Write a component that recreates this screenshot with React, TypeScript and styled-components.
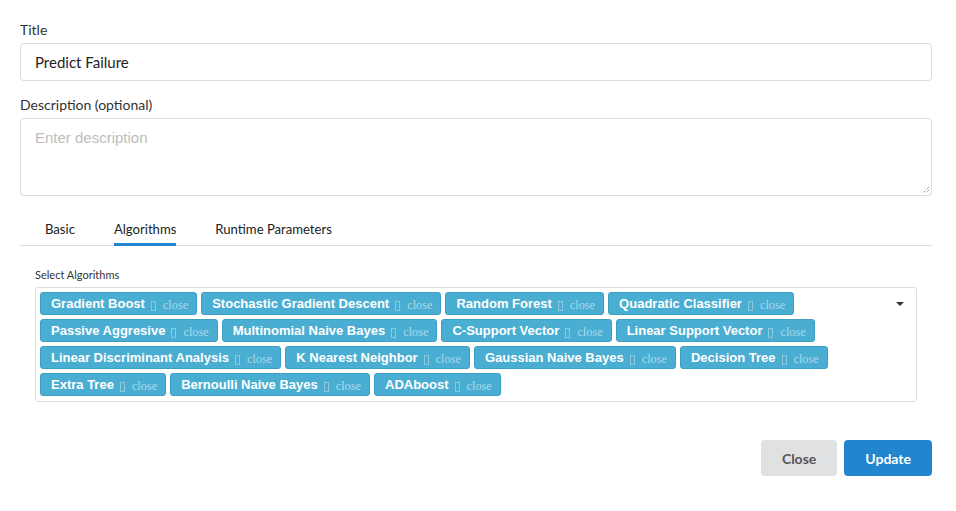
import React from 'react';
import styled, { createGlobalStyle } from 'styled-components';

const GlobalStyle = createGlobalStyle`
  body {
    margin: 0;
    background: #fff;
    font-family: 'Lato', 'Liberation Sans', sans-serif;
    color: #333;
  }
`;

const Page = styled.div`
  width: 956px;
  height: 511px;
  box-sizing: border-box;
  padding: 21px 24px 0 20px;
`;

const Label = styled.div`
  font-size: 14px;
  line-height: 18px;
  color: #333;
  margin-bottom: 4px;
`;

const Input = styled.div`
  height: 38px;
  box-sizing: border-box;
  border: 1px solid #ddd;
  border-radius: 4px;
  padding: 0 14px;
  display: flex;
  align-items: center;
  font-size: 15px;
  color: #222;
  margin-bottom: 15px;
`;

const TextArea = styled.div`
  position: relative;
  height: 78px;
  box-sizing: border-box;
  border: 1px solid #ddd;
  border-radius: 4px;
  padding: 10px 14px;
  font-family: 'Liberation Sans', Arial, sans-serif;
  font-size: 15px;
  color: #bdbdbd;
`;

const Grip = styled.svg`
  position: absolute;
  right: 1px;
  bottom: 1px;
`;

const Tabs = styled.div`
  display: flex;
  margin-top: 20px;
  border-bottom: 1px solid #ddd;
  padding-left: 25px;
  gap: 39px;
`;

const Tab = styled.div<{ $active?: boolean }>`
  font-size: 13.1px;
  line-height: 17px;
  padding: 5px 0 5px;
  color: #222;
  border-bottom: 3px solid ${p => (p.$active ? '#2185d0' : 'transparent')};
  margin-bottom: -1px;
`;

const Section = styled.div`
  padding: 22px 15px 0 15px;
`;

const SmallLabel = styled.div`
  font-size: 11px;
  line-height: 14px;
  color: #333;
  margin-bottom: 5px;
`;

const Select = styled.div`
  position: relative;
  border: 1px solid #ddd;
  border-radius: 3px;
  padding: 4px 30px 4px 4px;
  display: flex;
  flex-wrap: wrap;
  gap: 4px;
  min-height: 115px;
  box-sizing: border-box;
  align-content: flex-start;
`;

const Caret = styled.div`
  position: absolute;
  right: 12px;
  top: 14px;
  width: 0;
  height: 0;
  border-left: 4px solid transparent;
  border-right: 4px solid transparent;
  border-top: 4px solid #333;
`;

const Chip = styled.div`
  height: 23px;
  box-sizing: border-box;
  display: flex;
  align-items: center;
  padding: 0 8px 0 10px;
  background: #4aaed2;
  border: 1px solid #3d9fc4;
  border-radius: 3px;
  color: #fff;
  font-family: 'Liberation Sans', Arial, sans-serif;
  font-weight: bold;
  font-size: 13px;
  white-space: nowrap;
`;

const Tofu = styled.span`
  display: inline-block;
  width: 3px;
  height: 8px;
  border: 1px solid rgba(255, 255, 255, 0.35);
  margin: 4px 7px 0 6px;
`;

const CloseText = styled.span`
  font-family: 'Liberation Serif', serif;
  font-weight: normal;
  font-size: 12.3px;
  color: #a9d9ec;
  margin-top: 4px;
`;

const Footer = styled.div`
  display: flex;
  justify-content: flex-end;
  gap: 7px;
  margin-top: 38px;
`;

const Button = styled.button<{ $primary?: boolean }>`
  height: 36px;
  border: none;
  border-radius: 4px;
  padding: 0 21px;
  font-family: 'Lato', sans-serif;
  font-weight: bold;
  font-size: 14px;
  background: ${p => (p.$primary ? '#2185d0' : '#e0e1e2')};
  color: ${p => (p.$primary ? '#fff' : '#555')};
`;

const algorithms = [
  'Gradient Boost',
  'Stochastic Gradient Descent',
  'Random Forest',
  'Quadratic Classifier',
  'Passive Aggresive',
  'Multinomial Naive Bayes',
  'C-Support Vector',
  'Linear Support Vector',
  'Linear Discriminant Analysis',
  'K Nearest Neighbor',
  'Gaussian Naive Bayes',
  'Decision Tree',
  'Extra Tree',
  'Bernoulli Naive Bayes',
  'ADAboost',
];

export default function App() {
  return (
    <Page>
      <GlobalStyle />
      <Label>Title</Label>
      <Input>Predict Failure</Input>
      <Label>Description (optional)</Label>
      <TextArea>
        Enter description
        <Grip width="9" height="9" viewBox="0 0 9 9">
          <path d="M8 2 L2 8 M8 5 L5 8" stroke="#777" strokeWidth="1" strokeDasharray="1 1" />
        </Grip>
      </TextArea>
      <Tabs>
        <Tab>Basic</Tab>
        <Tab $active>Algorithms</Tab>
        <Tab>Runtime Parameters</Tab>
      </Tabs>
      <Section>
        <SmallLabel>Select Algorithms</SmallLabel>
        <Select>
          {algorithms.map(a => (
            <Chip key={a}>
              {a}
              <Tofu />
              <CloseText>close</CloseText>
            </Chip>
          ))}
          <Caret />
        </Select>
      </Section>
      <Footer>
        <Button>Close</Button>
        <Button $primary>Update</Button>
      </Footer>
    </Page>
  );
}
